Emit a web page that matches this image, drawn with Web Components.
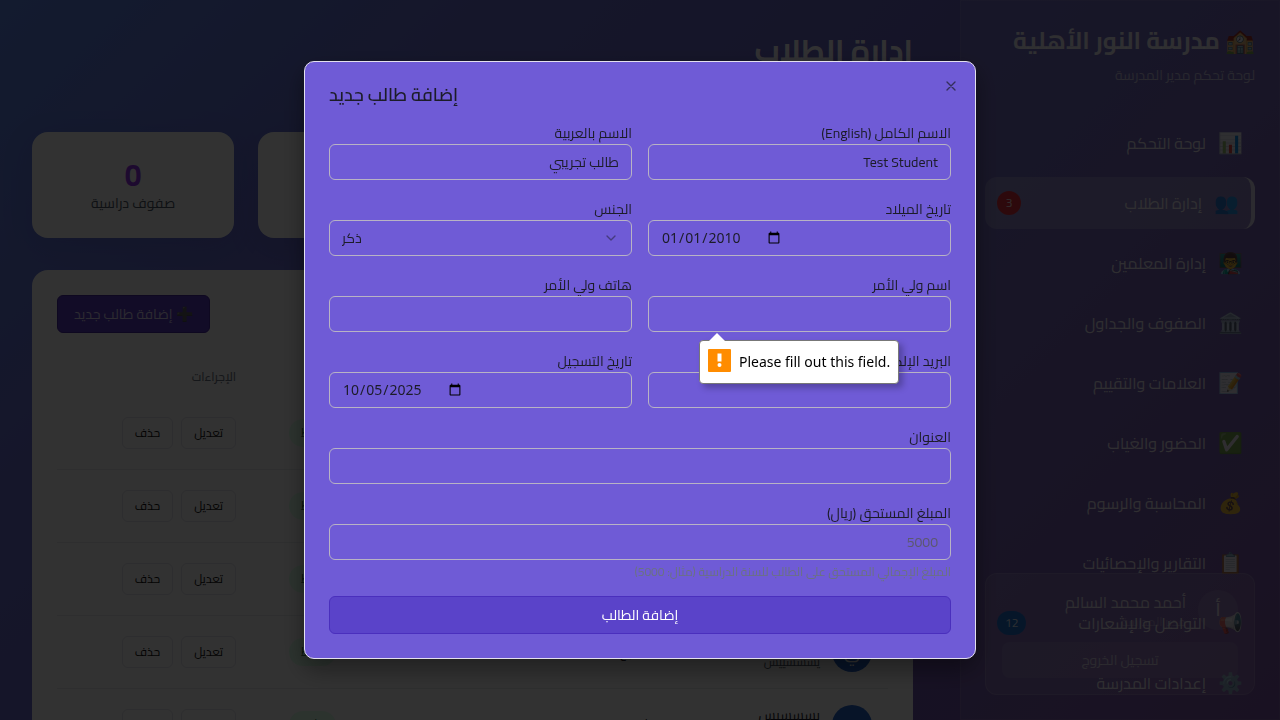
<!DOCTYPE html>
<html lang="ar" dir="rtl">
<head>
<meta charset="utf-8">
<meta name="viewport" content="width=device-width, initial-scale=1">
<title>مدرسة النور الأهلية</title>
<style>
  html, body { height: 100%; }
  body {
    margin: 0;
    overflow: hidden;
    color: #1c1c28;
    font: 14px/20px Cairo, "Noto Sans Arabic", "Noto Sans", "DejaVu Sans", sans-serif;
  }
</style>
</head>
<body>
<school-app></school-app>

<script>
const define = (name, html, setup) => {
  const template = document.createElement('template');
  template.innerHTML = '<style>*{box-sizing:border-box}button,input,select{font:inherit;color:inherit}[hidden]{display:none}</style>' + html;
  customElements.define(name, class extends HTMLElement {
    constructor() {
      super();
      this.attachShadow({ mode: 'open' }).append(template.content.cloneNode(true));
    }
    connectedCallback() {
      if (setup && !this.ready) { this.ready = true; setup(this, this.shadowRoot); }
    }
  });
};

/* Sidebar link with an emoji icon and an optional counter */
define('nav-item', `
  <style>
    :host { display: block; }
    a { display: flex; align-items: center; gap: 12px; height: 52px; padding: 0 12px; border-radius: 12px;
        color: #ffffffd9; text-decoration: none; font-size: 16px; line-height: 24px; }
    .icon { width: 25px; font-size: 20px; text-align: center; flex: none; }
    .text { flex: 1; }
    :host([active]) a { background: #ffffff33; border-inline-start: 4px solid #ffffffb0; }
    .badge { min-width: 24px; height: 24px; padding: 0 8px; border-radius: 12px; background: #e0303f;
             font-size: 12px; line-height: 24px; text-align: center; }
    :host([active]) .badge { padding: 0; }
    :host([tone=blue]) .badge { background: #0a5ec8; }
  </style>
  <a href="#"><span class="icon"></span><span class="text"><slot></slot></span><span class="badge" hidden></span></a>
`, (el, root) => {
  root.querySelector('.icon').textContent = el.getAttribute('icon');
  if (el.hasAttribute('count')) {
    const badge = root.querySelector('.badge');
    badge.hidden = false;
    badge.textContent = el.getAttribute('count');
  }
});

define('user-panel', `
  <style>
    :host { display: block; padding: 16px; border: 1px solid #ffffff22; border-radius: 12px; background: #ffffff1a; color: #ffffffc8; }
    .who { display: flex; gap: 12px; align-items: center; height: 40px; margin-bottom: 12px; }
    .avatar { width: 40px; height: 40px; border-radius: 50%; background: #ffffff20; font-weight: 600; font-size: 18px; line-height: 40px; text-align: center; }
    .name { font-size: 16px; line-height: 24px; }
    .role { font-size: 12px; line-height: 16px; color: #ffffff50; }
    button { display: block; width: 100%; height: 36px; border: 0; border-radius: 8px; background: #ffffff18; color: #ffffffa0; }
  </style>
  <div class="who"><span class="avatar">أ</span><div><div class="name">أحمد محمد السالم</div><div class="role">مدير المدرسة</div></div></div>
  <button type="button">تسجيل الخروج</button>
`);

define('side-bar', `
  <style>
    :host { display: block; position: relative; padding: 24px 24px 0; border: 1px solid #ffffff14; overflow: hidden;
            background: #ffffff12; color: #ffffffd9; }
    h1 { margin: 0; font-size: 24px; line-height: 32px; font-weight: 700; white-space: nowrap; }
    p { margin: 8px 0 32px; color: #ffffff99; }
    nav { display: grid; gap: 8px; }
    user-panel { position: absolute; inset: auto 24px 24px; }
  </style>
  <h1>🏫 مدرسة النور الأهلية</h1>
  <p>لوحة تحكم مدير المدرسة</p>
  <nav>
    <nav-item icon="📊">لوحة التحكم</nav-item>
    <nav-item icon="👥" active count="3">إدارة الطلاب</nav-item>
    <nav-item icon="👨‍🏫">إدارة المعلمين</nav-item>
    <nav-item icon="🏛️">الصفوف والجداول</nav-item>
    <nav-item icon="📝">العلامات والتقييم</nav-item>
    <nav-item icon="✅">الحضور والغياب</nav-item>
    <nav-item icon="💰">المحاسبة والرسوم</nav-item>
    <nav-item icon="📋">التقارير والإحصائيات</nav-item>
    <nav-item icon="📢" count="12" tone="blue">التواصل والإشعارات</nav-item>
    <nav-item icon="⚙️">إعدادات المدرسة</nav-item>
  </nav>
  <user-panel></user-panel>
`);

define('stat-card', `
  <style>
    :host { display: block; padding: 25px 24px; border-radius: 16px; background: #fafafa; text-align: center; box-shadow: 0 8px 32px #1f268720; }
    .value { font-size: 30px; line-height: 36px; font-weight: 700; color: #9333ea; }
    .text { color: #4b5563; }
  </style>
  <div class="value"></div><div class="text"><slot></slot></div>
`, (el, root) => { root.querySelector('.value').textContent = el.getAttribute('value'); });

define('student-table', `
  <style>
    :host { display: block; }
    table { width: 100%; border-collapse: separate; border-spacing: 0; table-layout: fixed; }
    th, td { padding: 0 16px; text-align: start; }
    th { height: 40px; font-size: 12px; font-weight: 500; color: #6b7280; }
    td { height: 73px; border-bottom: 1px solid #e5e7eb; }
    .name { width: 216px; } .status { width: 100px; } .acts { width: 195px; }
    .person { display: flex; gap: 12px; align-items: center; }
    .avatar { width: 40px; height: 40px; border-radius: 50%; background: #2563c9; color: #fff; font-size: 18px; line-height: 40px; text-align: center; }
    .sub { font-size: 12px; color: #4b5563; }
    .pill { display: inline-block; padding: 4px 12px; border-radius: 16px; background: #dcfce7; color: #166534; font-size: 12px; }
    .actions { display: flex; gap: 8px; }
    button { height: 32px; padding: 0 12px; border: 1px solid #e0e0e8; border-radius: 6px; background: none; font-size: 12px; color: #111; }
  </style>
  <table>
    <thead><tr><th class="name">الطالب</th><th>الصف</th><th>الهاتف</th><th class="status">الحالة</th><th class="acts">الإجراءات</th></tr></thead>
    <tbody></tbody>
  </table>
`, (el, root) => {
  root.querySelector('tbody').innerHTML = ['الأول', 'الثاني', 'الثالث', 'السابع', 'الثالث'].map(grade => `
    <tr>
      <td><div class="person"><span class="avatar">ي</span><div><div>يسسسيس</div><div class="sub">يسسسييس</div></div></div></td>
      <td>${grade}</td>
      <td>-</td>
      <td><span class="pill">نشط</span></td>
      <td><div class="actions"><button type="button">تعديل</button><button type="button">حذف</button></div></td>
    </tr>`).join('');
});

define('students-page', `
  <style>
    :host { display: block; padding: 32px 47px 0 32px; overflow: hidden; }
    h2 { margin: 0 0 64px; font-size: 30px; line-height: 36px; font-weight: 700; color: #fffffff0; }
    .stats { display: grid; grid-template-columns: repeat(4, 1fr); gap: 24px; margin-bottom: 32px; }
    .card { padding: 25px; border-radius: 16px; background: #fafafa; }
    header { display: flex; justify-content: flex-end; margin-bottom: 24px; }
    .add { height: 38px; padding: 0 16px; border: 1px solid #45289f; border-radius: 6px; background: #5b3cc4; color: #ffffffc8; }
    .add span { color: #222; }
  </style>
  <h2>إدارة الطلاب</h2>
  <div class="stats">
    <stat-card value="5">إجمالي الطلاب</stat-card>
    <stat-card value="5">طلاب نشطون</stat-card>
    <stat-card value="0">طلاب جدد</stat-card>
    <stat-card value="0">صفوف دراسية</stat-card>
  </div>
  <section class="card">
    <header><button type="button" class="add"><span>➕</span> إضافة طالب جديد</button></header>
    <student-table></student-table>
  </section>
`);

/* Labelled form control: text, date or select */
define('form-field', `
  <style>
    :host { display: block; position: relative; }
    label { display: block; height: 24px; line-height: 26px; white-space: nowrap; }
    .control { display: grid; align-items: center; }
    input, select, svg { grid-area: 1 / 1; }
    input, select { width: 100%; height: 36px; margin: 0; padding: 0 12px; border: 1px solid #b8b3c4; border-radius: 6px; background: none; outline: none; }
    select { appearance: none; }
    svg { justify-self: right; margin-right: 13px; pointer-events: none; }
    input::placeholder { color: #5c5870; opacity: 1; }
    input[type=date] { font-family: "Noto Sans", sans-serif; }
    ::-webkit-datetime-edit { flex: none; }
    ::-webkit-calendar-picker-indicator { margin-inline: -4px 0; }
    small { display: block; font-size: 12px; line-height: 24px; height: 20px; color: #6b7280; }
  </style>
  <label for="c"></label><div class="control"></div><small hidden></small><slot></slot>
`, (el, root) => {
  const kind = el.getAttribute('type') || 'text';
  root.querySelector('label').textContent = el.getAttribute('label');
  const control = document.createElement(kind === 'select' ? 'select' : 'input');
  control.id = 'c';
  const box = root.querySelector('.control');
  box.append(control);
  if (kind === 'select') {
    control.dir = 'ltr';
    control.add(new Option(el.getAttribute('value')));
    control.add(new Option('أنثى'));
    box.insertAdjacentHTML('beforeend', '<svg width="16" height="16" viewBox="0 0 24 24" fill="none" stroke="#1c1c28" stroke-opacity=".5" stroke-width="2" stroke-linecap="round" stroke-linejoin="round"><path d="m6 9 6 6 6-6"/></svg>');
  } else {
    control.type = kind;
    if (kind === 'date') control.dir = 'ltr';
    control.value = el.getAttribute('value') || '';
    control.placeholder = el.getAttribute('placeholder') || '';
  }
  if (el.hasAttribute('hint')) {
    const hint = root.querySelector('small');
    hint.hidden = false;
    hint.textContent = el.getAttribute('hint');
  }
});

define('error-bubble', `
  <style>
    :host { position: absolute; z-index: 2; top: 68px; left: 51px; display: flex; align-items: flex-start; gap: 8px; direction: ltr;
            height: 44px; padding: 8px; border: 1px solid #777; border-radius: 4px; background: #fff; color: #000;
            box-shadow: 4px 4px 6px #00000040; font: 14px/26px "Noto Sans", sans-serif; white-space: nowrap; box-sizing: border-box; }
    .tip { position: absolute; top: -8px; left: 8px; }
  </style>
  <svg class="tip" width="18" height="9" viewBox="0 0 18 9"><path d="M0 9 9 0l9 9z" fill="#fff"/></svg>
  <svg width="23" height="23" viewBox="0 0 23 23"><rect width="23" height="23" rx="1" fill="#ff8c00"/><path d="M9.500 4.500h4v8h-4z" fill="#fff"/><circle cx="11.500" cy="16" r="2" fill="#fff"/></svg>
  <span><slot></slot></span>
`);

define('student-dialog', `
  <style>
    :host { position: fixed; inset: 0; display: grid; place-items: center; background: #000c; }
    section { position: relative; width: 100%; max-width: 672px; padding: 24px; border: 1px solid #e3e0ee; border-radius: 10px; background: #6f5bd6; box-shadow: 0 10px 24px #0006; }
    h2 { margin: 0 0 16px; font-size: 18px; line-height: 18px; font-weight: 600; text-align: left; }
    .close { position: absolute; top: 16px; right: 16px; width: 16px; height: 16px; padding: 0; border: 0; background: none; opacity: .7; }
    .close svg { display: block; }
    form { display: grid; grid-template-columns: 1fr 1fr; gap: 16px; }
    .wide { grid-column: 1 / -1; }
    .submit { height: 38px; border: 1px solid #4a2fbd; border-radius: 6px; background: #5a43c9; color: #fff; }
  </style>
  <section role="dialog" aria-labelledby="t">
    <button type="button" class="close" aria-label="إغلاق"><svg width="16" height="16" viewBox="0 0 24 24" fill="none" stroke="#1c1c28" stroke-width="2" stroke-linecap="round"><path d="M18 6 6 18M6 6l12 12"/></svg></button>
    <h2 id="t">إضافة طالب جديد</h2>
    <form>
      <form-field label="الاسم الكامل (English)" value="Test Student"></form-field>
      <form-field label="الاسم بالعربية" value="طالب تجريبي"></form-field>
      <form-field label="تاريخ الميلاد" type="date" value="2010-01-01"></form-field>
      <form-field label="الجنس" type="select" value="ذكر"></form-field>
      <form-field label="اسم ولي الأمر"><error-bubble>Please fill out this field.</error-bubble></form-field>
      <form-field label="هاتف ولي الأمر"></form-field>
      <form-field label="البريد الإلكتروني"></form-field>
      <form-field label="تاريخ التسجيل" type="date" value="2025-10-05"></form-field>
      <form-field class="wide" label="العنوان"></form-field>
      <form-field class="wide" label="المبلغ المستحق (ريال)" placeholder="5000" hint="المبلغ الإجمالي المستحق على الطالب للسنة الدراسية (مثال: 5000)"></form-field>
      <button type="button" class="submit wide">إضافة الطالب</button>
    </form>
  </section>
`);

define('school-app', `
  <style>
    :host { display: grid; grid-template-columns: 320px 1fr; height: 100vh; background: linear-gradient(135deg, #5f86ea, #6a6fd2 25%, #6c62bd 60%, #764ba2); }
    side-bar, students-page { min-width: 0; min-height: 0; }
  </style>
  <side-bar></side-bar>
  <students-page></students-page>
  <student-dialog></student-dialog>
`);
</script>
</body>
</html>
